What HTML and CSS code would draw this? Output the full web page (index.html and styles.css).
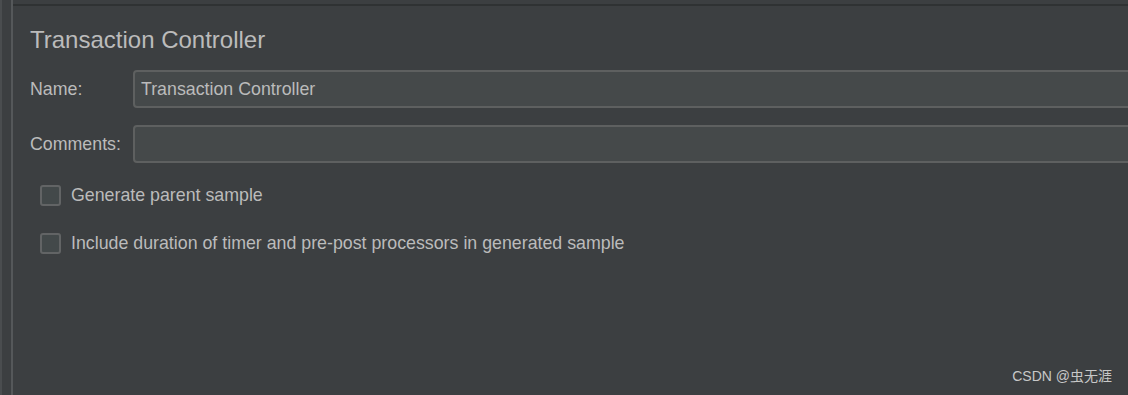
FILE: index.html
```html
<!DOCTYPE html>
<html lang="en">
<head>
    <meta charset="UTF-8">
    <title>Transaction Controller</title>
    <link rel="stylesheet" href="styles.css">
</head>
<body>
    <div class="frame">
        <div class="gutter"></div>
        <div class="panel">
            <h1 class="title">Transaction Controller</h1>
            <div class="field">
                <label class="field-label" for="name">Name:</label>
                <input class="field-input" id="name" type="text" value="Transaction Controller">
            </div>
            <div class="field">
                <label class="field-label" for="comments">Comments:</label>
                <input class="field-input" id="comments" type="text" value="">
            </div>
            <label class="check">
                <span class="check-box"></span>
                <span>Generate parent sample</span>
            </label>
            <label class="check">
                <span class="check-box"></span>
                <span>Include duration of timer and pre-post processors in generated sample</span>
            </label>
        </div>
    </div>
    <div class="watermark">CSDN @虫无涯</div>
</body>
</html>
```

FILE: styles.css
```css
* {
    margin: 0;
    padding: 0;
    box-sizing: border-box;
    font-family: 'Liberation Sans', Arial, 'Noto Sans CJK SC', sans-serif;
}
body {
    background-color: #3c3f41;
    color: #bbbbbb;
    width: 1128px;
    height: 395px;
    overflow: hidden;
    position: relative;
}
.frame {
    display: flex;
    height: 395px;
    border-left: 2px solid #4a4d4f;
}
.gutter {
    width: 11px;
    border-right: 2px solid #55585a;
}
.panel {
    flex: 1;
    border-top: 2px solid #2f3233;
    margin-top: 4px;
    padding: 20px 0 0 17px;
}
.title {
    font-size: 24px;
    font-weight: normal;
    color: #bbbbbb;
    height: 28px;
    line-height: 28px;
    margin-bottom: 16px;
}
.field {
    display: flex;
    align-items: center;
    margin-bottom: 17px;
}
.field-label {
    width: 103px;
    font-size: 17.8px;
}
.field-input {
    flex: 1;
    height: 38px;
    margin-right: -10px;
    padding: 0 6px;
    font-size: 17.8px;
    color: #bbbbbb;
    background-color: #45494a;
    border: 2px solid #5e6060;
    border-radius: 4px;
    outline: none;
}
.check {
    display: flex;
    align-items: center;
    gap: 10px;
    margin-left: 10px;
    font-size: 17.8px;
    height: 20px;
    margin-bottom: 28px;
}
.check:first-of-type {
    margin-top: 22px;
}
.check-box {
    width: 21px;
    height: 21px;
    background-color: #43494a;
    border: 2px solid #626465;
    border-radius: 3px;
}
.watermark {
    position: absolute;
    right: 16px;
    bottom: 10px;
    font-size: 14px;
    color: #c8c8c8;
}
```
